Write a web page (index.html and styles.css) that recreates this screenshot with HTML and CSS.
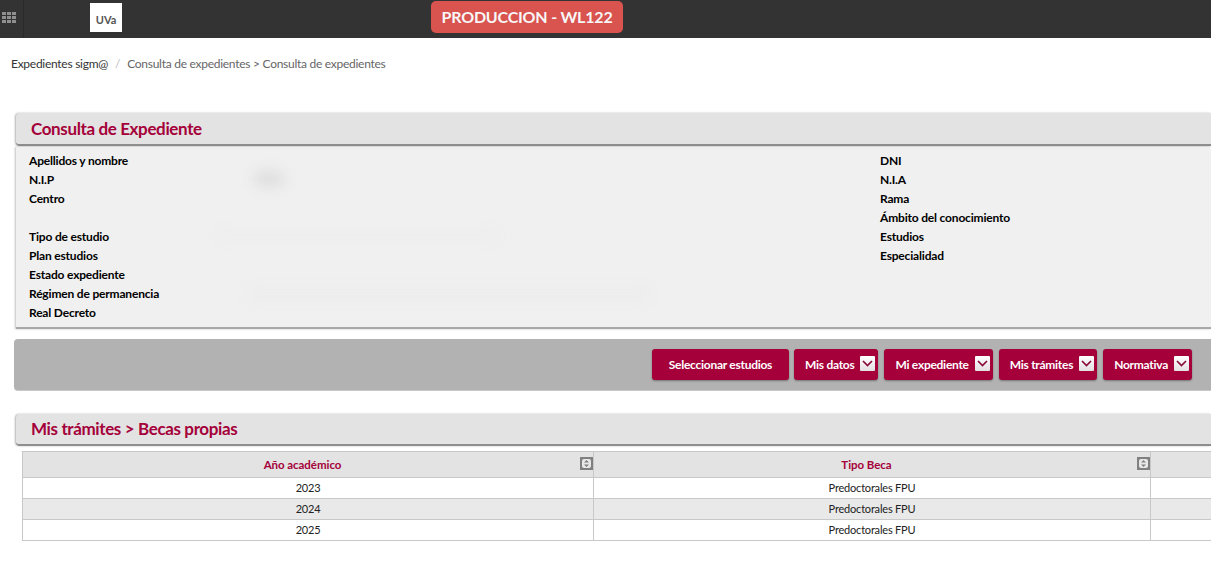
FILE: index.html
```html
<!DOCTYPE html>
<html lang="es">
<head>
    <meta charset="UTF-8">
    <title>Consulta de expedientes</title>
    <link rel="stylesheet" href="styles.css">
</head>
<body>
    <header class="topbar">
        <div class="apps-btn">
            <svg width="14" height="11" viewBox="0 0 14 11" fill="#8f8f8f">
                <rect x="0" y="0" width="4" height="3"/><rect x="5" y="0" width="4" height="3"/><rect x="10" y="0" width="4" height="3"/>
                <rect x="0" y="4" width="4" height="3"/><rect x="5" y="4" width="4" height="3"/><rect x="10" y="4" width="4" height="3"/>
                <rect x="0" y="8" width="4" height="3"/><rect x="5" y="8" width="4" height="3"/><rect x="10" y="8" width="4" height="3"/>
            </svg>
        </div>
        <div class="logo">UVa</div>
        <div class="env-badge">PRODUCCION - WL122</div>
    </header>

    <nav class="breadcrumb">
        <a href="#">Expedientes sigm@</a>
        <span class="sep">/</span>
        <span class="current">Consulta de expedientes &gt; Consulta de expedientes</span>
    </nav>

    <main class="content">
        <h2 class="panel-title">Consulta de Expediente</h2>
        <section class="details">
            <div class="details-col">
                <div class="field"><b>Apellidos y nombre</b></div>
                <div class="field"><b>N.I.P</b><span class="smudge smudge-nip"></span></div>
                <div class="field"><b>Centro</b></div>
                <div class="field"></div>
                <div class="field"><b>Tipo de estudio</b><span class="smudge smudge-long"></span></div>
                <div class="field"><b>Plan estudios</b></div>
                <div class="field"><b>Estado expediente</b></div>
                <div class="field"><b>Régimen de permanencia</b><span class="smudge smudge-wide"></span></div>
                <div class="field"><b>Real Decreto</b></div>
            </div>
            <div class="details-col">
                <div class="field"><b>DNI</b></div>
                <div class="field"><b>N.I.A</b></div>
                <div class="field"><b>Rama</b></div>
                <div class="field"><b>Ámbito del conocimiento</b></div>
                <div class="field"><b>Estudios</b></div>
                <div class="field"><b>Especialidad</b></div>
            </div>
        </section>

        <div class="toolbar">
            <button class="btn btn-plain">Seleccionar estudios</button>
            <button class="btn">Mis datos <span class="caret"><svg width="11" height="7" viewBox="0 0 11 7"><path d="M1 1l4.5 4.5L10 1" fill="none" stroke="#8a0a3a" stroke-width="1.7"/></svg></span></button>
            <button class="btn">Mi expediente <span class="caret"><svg width="11" height="7" viewBox="0 0 11 7"><path d="M1 1l4.5 4.5L10 1" fill="none" stroke="#8a0a3a" stroke-width="1.7"/></svg></span></button>
            <button class="btn">Mis trámites <span class="caret"><svg width="11" height="7" viewBox="0 0 11 7"><path d="M1 1l4.5 4.5L10 1" fill="none" stroke="#8a0a3a" stroke-width="1.7"/></svg></span></button>
            <button class="btn">Normativa <span class="caret"><svg width="11" height="7" viewBox="0 0 11 7"><path d="M1 1l4.5 4.5L10 1" fill="none" stroke="#8a0a3a" stroke-width="1.7"/></svg></span></button>
        </div>

        <h2 class="panel-title panel-title-second">Mis trámites &gt; Becas propias</h2>
        <table class="grid">
            <colgroup>
                <col class="col-year">
                <col class="col-type">
                <col class="col-rest">
            </colgroup>
            <thead>
                <tr>
                    <th>Año académico<span class="sort"><svg width="13" height="13" viewBox="0 0 13 13"><rect width="13" height="13" fill="#808080"/><rect x="2" y="2" width="9" height="9" rx="2" fill="#e8e8e8"/><path d="M6.5 3L9 5.6H4zM6.5 10L4 7.4h5z" fill="#808080"/></svg></span></th>
                    <th>Tipo Beca<span class="sort"><svg width="13" height="13" viewBox="0 0 13 13"><rect width="13" height="13" fill="#808080"/><rect x="2" y="2" width="9" height="9" rx="2" fill="#e8e8e8"/><path d="M6.5 3L9 5.6H4zM6.5 10L4 7.4h5z" fill="#808080"/></svg></span></th>
                    <th></th>
                </tr>
            </thead>
            <tbody>
                <tr><td>2023</td><td>Predoctorales FPU</td><td></td></tr>
                <tr class="alt"><td>2024</td><td>Predoctorales FPU</td><td></td></tr>
                <tr><td>2025</td><td>Predoctorales FPU</td><td></td></tr>
            </tbody>
        </table>
    </main>
</body>
</html>
```

FILE: styles.css
```css
* {
    margin: 0;
    padding: 0;
    box-sizing: border-box;
}

body {
    background: white;
    font-family: 'Lato', 'Open Sans', sans-serif;
    font-size: 12px;
    color: #000;
}

.topbar {
    height: 38px;
    background: #333;
    display: flex;
    align-items: flex-start;
}

.apps-btn {
    width: 24px;
    height: 38px;
    border-right: 1px solid #2a2a2a;
    padding: 12px 0 0 2px;
}

.apps-btn svg {
    display: block;
}

.logo {
    width: 32px;
    height: 29px;
    margin: 3px 0 0 66px;
    background: white;
    color: #555;
    font-size: 11px;
    font-weight: 700;
    line-height: 33px;
    text-align: center;
}

.env-badge {
    width: 192px;
    height: 32px;
    margin: 1px 0 0 309px;
    background: #d9534f;
    border-radius: 5px;
    color: #f7f7f7;
    font-size: 16px;
    font-weight: 700;
    letter-spacing: -0.2px;
    line-height: 32px;
    text-align: center;
}

.breadcrumb {
    display: flex;
    gap: 6px;
    padding: 18px 0 0 11px;
    height: 75px;
    line-height: 15px;
    color: #666;
    letter-spacing: -0.27px;
}

.breadcrumb a {
    color: #333;
    text-decoration: none;
}

.breadcrumb .sep {
    color: #bbb;
    padding: 0 1px;
}

.content {
    padding-left: 16px;
}

.panel-title {
    height: 33px;
    background: #e3e3e3;
    border-radius: 4px 0 0 4px;
    border-bottom: 2px solid #8e8e8e;
    box-shadow: -1px 0 2px rgba(0, 0, 0, 0.3);
    color: #a5003a;
    font-size: 17px;
    font-weight: 700;
    letter-spacing: -0.37px;
    line-height: 31px;
    padding-left: 15px;
}

.panel-title-second {
    height: 32px;
    line-height: 30px;
    margin-top: 23px;
}

.details {
    height: 182px;
    margin-top: 1px;
    padding: 4px 0 0 13px;
    background: #f0f0f0;
    border-bottom: 2px solid #a8a8a8;
    box-shadow: -1px 0 2px rgba(0, 0, 0, 0.25);
    display: flex;
    overflow: hidden;
}

.details-col {
    flex: none;
    width: 851px;
}

.details-col + .details-col {
    flex: 1;
    width: auto;
}

.field {
    position: relative;
    height: 19px;
    line-height: 19px;
    letter-spacing: -0.18px;
}

.smudge {
    position: absolute;
    background: #dcdcdc;
    filter: blur(7px);
}

.smudge-nip {
    left: 226px;
    top: 2px;
    width: 28px;
    height: 14px;
}

.smudge-long {
    left: 190px;
    top: 6px;
    width: 280px;
    height: 5px;
    background: #ebebeb;
}

.smudge-wide {
    left: 220px;
    top: 6px;
    width: 400px;
    height: 8px;
    background: #ebebeb;
}

.toolbar {
    height: 52px;
    margin: 10px 0 0 -2px;
    padding: 10px 19px 0 0;
    background: #b2b2b2;
    border-radius: 4px 0 0 4px;
    border-bottom: 1px solid #c9c9c9;
    display: flex;
    justify-content: flex-end;
    gap: 6px;
}

.btn {
    height: 31px;
    padding: 0 3px 0 11px;
    background: #a5003a;
    border: none;
    border-radius: 3px;
    box-shadow: 0 1px 2px rgba(0, 0, 0, 0.35);
    color: white;
    font-family: inherit;
    font-size: 12px;
    font-weight: 700;
    letter-spacing: -0.27px;
    display: flex;
    align-items: center;
    gap: 6px;
}

.btn-plain {
    width: 137px;
    margin-right: -1px;
    padding: 0;
    justify-content: center;
}

.caret {
    width: 15px;
    height: 15px;
    margin-top: -2px;
    background: linear-gradient(white, #e4dfe1);
    border-radius: 1px;
    display: flex;
    align-items: center;
    justify-content: center;
}

.grid {
    width: 1189px;
    margin: 5px 0 0 6px;
    border-collapse: collapse;
    table-layout: fixed;
}

.col-year {
    width: 571px;
}

.col-type {
    width: 557px;
}

.grid th,
.grid td {
    border: 1px solid #c8c8c8;
    text-align: center;
}

.grid th:last-child,
.grid td:last-child {
    border-right: none;
}

.grid th {
    position: relative;
    height: 26px;
    padding-right: 11px;
    background: #e3e3e3;
    color: #a5003a;
    font-size: 11.5px;
    font-weight: 700;
    letter-spacing: -0.05px;
}

.grid td {
    height: 21px;
    padding-bottom: 2px;
    font-size: 11px;
    letter-spacing: -0.2px;
    color: #222;
}

.alt td {
    background: #e9e9e9;
}

.sort {
    position: absolute;
    top: 5px;
    right: 0;
    height: 13px;
}

.sort svg {
    display: block;
}
```
